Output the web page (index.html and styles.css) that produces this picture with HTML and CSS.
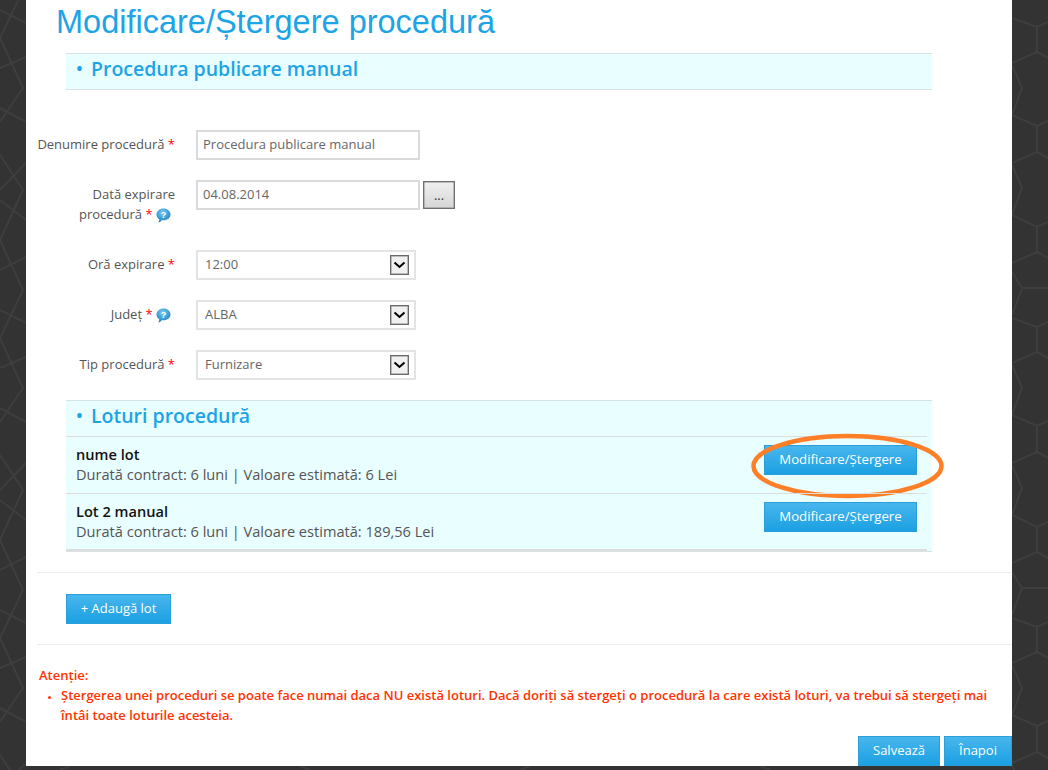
FILE: index.html
```html
<!DOCTYPE html>
<html lang="ro">
<head>
<meta charset="utf-8">
<title>Modificare/Ștergere procedură</title>
<link rel="stylesheet" href="styles.css">
</head>
<body>
<svg class="backdrop" width="1048" height="770" viewBox="0 0 1048 770" aria-hidden="true">
  <defs>
    <g id="hex-left">
      <path d="M0 38L23 88L0 122M0 68L26 57M0 108L26 122"/>
      <path d="M0 155L23 190L0 240M0 190L26 163M0 200L26 220"/>
      <path d="M0 240L23 290L0 338M0 270L26 257M0 310L26 323"/>
    </g>
    <g id="hex-right">
      <path d="M1012 18L1037 27L1048 22M1037 27V52L1012 63M1037 52L1048 58M1012 65L1022 88L1012 115"/>
      <path d="M1012 115L1037 126L1048 121M1037 126V152L1012 163M1037 152L1048 158M1012 165L1022 188L1012 215"/>
      <path d="M1012 215L1037 227L1048 222M1037 227V252L1012 263M1037 252L1048 258M1012 272L1022 288L1012 315M1022 288H1048"/>
    </g>
  </defs>
  <g class="hex-lines">
    <use href="#hex-left" y="-300"/>
    <use href="#hex-left"/>
    <use href="#hex-left" y="300"/>
    <use href="#hex-left" y="600"/>
    <use href="#hex-right"/>
    <use href="#hex-right" y="300"/>
    <use href="#hex-right" y="600"/>
    <path d="M60 770L70 766M300 766L310 770M520 770L530 766M760 766L770 770"/>
  </g>
</svg>

<main class="panel">
  <h1 class="page-title">Modificare/Ștergere procedură</h1>

  <h2 class="band"><span class="band-dot">•</span>Procedura publicare manual</h2>

  <form class="form">
    <div class="row">
      <label class="label">Denumire procedură <span class="req">*</span></label>
      <input class="field" type="text" value="Procedura publicare manual">
    </div>
    <div class="row row-tall">
      <label class="label">Dată expirare procedură <span class="req">*</span>
        <svg class="help" width="15" height="15" viewBox="0 0 15 15" aria-hidden="true"><use href="#help-icon"/></svg>
      </label>
      <input class="field" type="text" value="04.08.2014">
      <button class="picker" type="button">...</button>
    </div>
    <div class="row">
      <label class="label">Oră expirare <span class="req">*</span></label>
      <div class="select-wrap">
        <select class="select"><option>12:00</option></select>
        <span class="select-arrow"><svg width="13" height="8" viewBox="0 0 13 8" aria-hidden="true"><path d="M1.5 1.5L6.5 6L11.5 1.5" fill="none" stroke="#000" stroke-width="2"/></svg></span>
      </div>
    </div>
    <div class="row">
      <label class="label">Județ <span class="req">*</span>
        <svg class="help" width="15" height="15" viewBox="0 0 15 15" aria-hidden="true">
          <defs>
            <radialGradient id="help-fill" cx="45%" cy="30%" r="75%"><stop offset="0" stop-color="#7ccdf2"/><stop offset="1" stop-color="#0f78bb"/></radialGradient>
            <g id="help-icon">
              <path d="M7.5 0.5C11.4 0.5 14.5 3.2 14.5 6.5C14.5 9.8 11.4 12.3 7.5 12.3C6.9 12.3 6.4 12.3 5.9 12.1C5 13.4 3.6 14.4 2.2 14.5C3 13.6 3.3 12.4 3.2 11.2C1.5 10.1 0.5 8.4 0.5 6.5C0.5 3.2 3.6 0.5 7.5 0.5Z" fill="url(#help-fill)"/>
              <text x="7.5" y="10" text-anchor="middle" class="help-mark">?</text>
            </g>
          </defs>
          <use href="#help-icon"/>
        </svg>
      </label>
      <div class="select-wrap">
        <select class="select"><option>ALBA</option></select>
        <span class="select-arrow"><svg width="13" height="8" viewBox="0 0 13 8" aria-hidden="true"><path d="M1.5 1.5L6.5 6L11.5 1.5" fill="none" stroke="#000" stroke-width="2"/></svg></span>
      </div>
    </div>
    <div class="row">
      <label class="label">Tip procedură <span class="req">*</span></label>
      <div class="select-wrap">
        <select class="select"><option>Furnizare</option></select>
        <span class="select-arrow"><svg width="13" height="8" viewBox="0 0 13 8" aria-hidden="true"><path d="M1.5 1.5L6.5 6L11.5 1.5" fill="none" stroke="#000" stroke-width="2"/></svg></span>
      </div>
    </div>
  </form>

  <h2 class="band band-lots"><span class="band-dot">•</span>Loturi procedură</h2>
  <div class="lots">
    <div class="lot lot-marked">
      <div class="lot-text">
        <strong class="lot-name">nume lot</strong>
        <span>Durată contract: 6 luni | Valoare estimată: 6 Lei</span>
      </div>
      <button class="btn btn-lot" type="button">Modificare/Ștergere</button>
      <svg class="marker" width="196" height="68" viewBox="0 0 196 68" aria-hidden="true"><ellipse cx="97.5" cy="33" rx="94" ry="30" fill="none" stroke="#ff7f27" stroke-width="4.5"/></svg>
    </div>
    <div class="lot">
      <div class="lot-text">
        <strong class="lot-name">Lot 2 manual</strong>
        <span>Durată contract: 6 luni | Valoare estimată: 189,56 Lei</span>
      </div>
      <button class="btn btn-lot" type="button">Modificare/Ștergere</button>
    </div>
  </div>

  <div class="add-bar">
    <button class="btn btn-add" type="button">+ Adaugă lot</button>
  </div>

  <section class="notice">
    <p class="notice-title">Atenție:</p>
    <ul class="notice-list">
      <li>Ștergerea unei proceduri se poate face numai daca NU există loturi. Dacă doriți să stergeți o procedură la care există loturi, va trebui să stergeți mai întâi toate loturile acesteia.</li>
    </ul>
  </section>

  <div class="actions">
    <button class="btn btn-save" type="button">Salvează</button>
    <button class="btn btn-back" type="button">Înapoi</button>
  </div>
</main>
</body>
</html>
```

FILE: styles.css
```css
html, body {
  margin: 0;
  padding: 0;
  height: 770px;
  overflow: hidden;
  background: #333;
}

body {
  position: relative;
  font-family: "Open Sans", sans-serif;
  font-size: 13px;
  color: #555;
}

.backdrop {
  position: absolute;
  left: 0;
  top: 0;
}

.hex-lines {
  fill: none;
  stroke: #3e3e3e;
  stroke-width: 2;
}

.panel {
  position: relative;
  box-sizing: border-box;
  width: 986px;
  height: 766px;
  margin-left: 26px;
  background: #fff;
  display: flex;
  flex-direction: column;
}

.page-title {
  margin: 0;
  height: 53px;
  padding-left: 30px;
  font-family: "Liberation Sans", Arial, sans-serif;
  font-size: 32.5px;
  font-weight: 400;
  line-height: 45px;
  color: #1ca4e6;
}

.band {
  box-sizing: border-box;
  width: 866px;
  height: 37px;
  margin: 0 0 0 40px;
  padding-left: 10px;
  background: #e9feff;
  border-top: 1px solid #d3e3e6;
  border-bottom: 1px solid #d9e3e6;
  font-size: 19.5px;
  font-weight: 600;
  line-height: 29px;
  color: #1ca4e6;
  display: flex;
}

.band-dot {
  width: 15px;
  font-size: 18px;
}

.band-lots {
  height: 36px;
  border-bottom: 0;
}

.form {
  display: flex;
  flex-direction: column;
  gap: 20px;
  padding: 40px 0 20px;
}

.row {
  display: flex;
  align-items: flex-start;
  height: 30px;
}

.row-tall {
  height: 50px;
}

.label {
  box-sizing: border-box;
  width: 149px;
  padding: 4px 0 0 4px;
  line-height: 20px;
  text-align: right;
  color: #555;
}

.req {
  color: #f00;
}

.help {
  vertical-align: -4px;
  margin-right: 4px;
}

.help-mark {
  font-family: "Liberation Sans", sans-serif;
  font-size: 9px;
  font-weight: 700;
  fill: #fff;
}

.field {
  box-sizing: border-box;
  width: 224px;
  height: 30px;
  margin: 0 0 0 21px;
  padding: 0 5px 2px;
  border: 2px solid #dadada;
  background: #fff;
  font: 13px "Open Sans", sans-serif;
  color: #666;
  outline: 0;
}

.picker {
  box-sizing: border-box;
  width: 32px;
  height: 28px;
  margin: 1px 0 0 3px;
  padding: 0;
  border: 1px solid #707070;
  box-shadow: inset 0 0 0 0.5px #8a8a8a;
  background: linear-gradient(#f0f0f0, #d6d6d6);
  font: 13px "Open Sans", sans-serif;
  color: #333;
}

.select-wrap {
  position: relative;
  width: 220px;
  height: 30px;
  margin-left: 21px;
}

.select {
  box-sizing: border-box;
  width: 100%;
  height: 100%;
  padding: 0 7px 2px;
  border: 2px solid #e4e4e4;
  border-radius: 0;
  background: #fff;
  appearance: none;
  font: 13px "Open Sans", sans-serif;
  color: #666;
  outline: 0;
}

.select-arrow {
  position: absolute;
  top: 5px;
  right: 7px;
  box-sizing: border-box;
  width: 19px;
  height: 20px;
  border: 1px solid #6a6a6a;
  box-shadow: inset 0 0 0 0.5px #888;
  background: #f0f0f0;
  display: flex;
  align-items: center;
  justify-content: center;
}

.lots {
  box-sizing: border-box;
  width: 866px;
  margin-left: 40px;
  padding-right: 5px;
  background: #e9feff;
  border-bottom: 1px solid #d9e3e6;
}

.lot {
  position: relative;
  box-sizing: border-box;
  height: 57px;
  padding: 7px 10px 0;
  border-top: 1px solid #ddd;
  display: flex;
  justify-content: space-between;
  align-items: flex-start;
}

.lot + .lot {
  height: 58px;
  border-bottom: 2px solid #ddd;
}

.lot-text {
  display: flex;
  flex-direction: column;
  font-size: 14.6px;
  line-height: 20px;
  color: #555;
}

.lot-name {
  font-size: 14.6px;
  font-weight: 600;
  color: #111;
}

.btn {
  box-sizing: border-box;
  height: 30px;
  padding: 0 0 2px;
  border: 1px solid #2c9fd9;
  background: linear-gradient(#48b6ed, #1ba0e2);
  font: 13px "Open Sans", sans-serif;
  color: #fff;
}

.btn-lot {
  width: 153px;
  margin-top: 1px;
  font-size: 13.2px;
}

.marker {
  position: absolute;
  top: -4px;
  right: -19px;
}

.add-bar {
  margin-top: 20px;
  padding: 21px 0 20px 40px;
  margin-left: 11px;
  border-top: 1px solid #eee;
  border-bottom: 1px solid #eee;
}

.add-bar .btn-add {
  width: 105px;
  margin-left: -11px;
  display: block;
}

.notice {
  padding: 20px 20px 0 13px;
  font-weight: 600;
  line-height: 20px;
  color: #ff3300;
}

.notice-title {
  margin: 0;
}

.notice-list {
  margin: 0;
  padding: 0 0 0 22px;
}

.notice-list li::marker {
  font-size: 9px;
}

.actions {
  margin-top: auto;
  display: flex;
  justify-content: flex-end;
  gap: 4px;
}

.btn-save {
  width: 82px;
}

.btn-back {
  width: 68px;
}
```
